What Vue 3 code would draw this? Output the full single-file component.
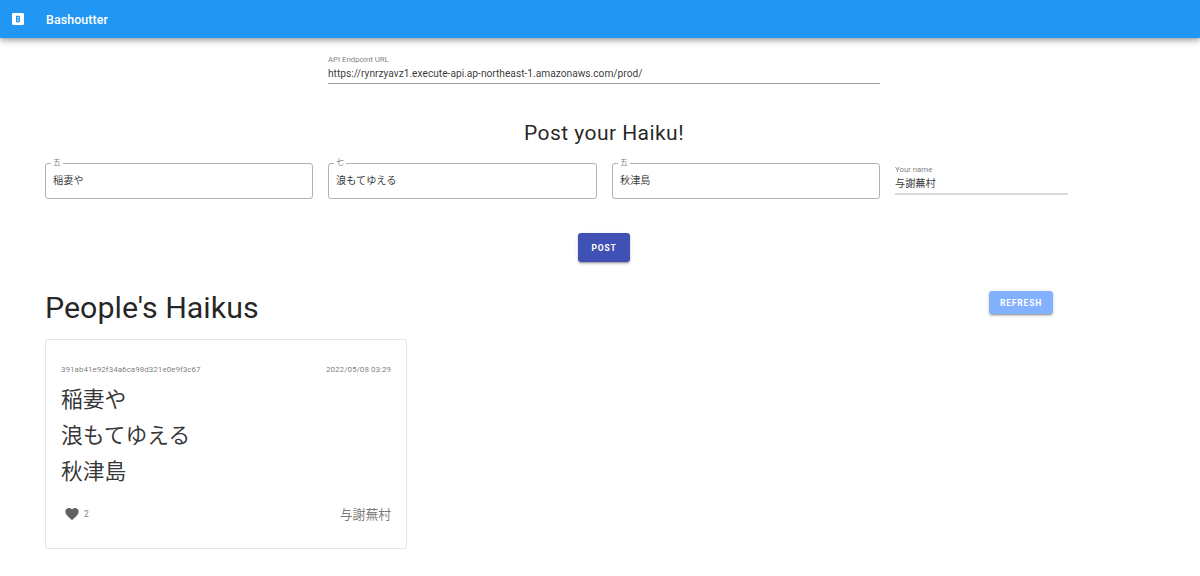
<template>
  <div class="app">
    <header class="app-bar">
      <svg class="logo" viewBox="0 0 24 24"><path fill-rule="evenodd" d="M15,10.5V9A2,2 0 0,0 13,7H9V17H13A2,2 0 0,0 15,15V13.5C15,12.7 14.3,12 13.5,12C14.3,12 15,11.3 15,10.5M13,15H11V13H13V15M13,11H11V9H13V11M19,3H5C3.89,3 3,3.9 3,5V19A2,2 0 0,0 5,21H19A2,2 0 0,0 21,19V5C21,3.89 20.1,3 19,3Z" /></svg>
      <span class="title">Bashoutter</span>
    </header>

    <main class="content">
      <div class="endpoint">
        <div class="small-label">API Endpoint URL</div>
        <div class="line-value">{{ endpoint }}</div>
      </div>

      <h2 class="post-title">Post your Haiku!</h2>

      <div class="form-row">
        <fieldset v-for="(field, i) in fields" :key="i" class="outlined">
          <legend>{{ field.label }}</legend>
          <span>{{ field.value }}</span>
        </fieldset>
        <div class="name-field">
          <div class="small-label">Your name</div>
          <div class="line-value light">与謝蕪村</div>
        </div>
      </div>

      <div class="post-row">
        <button class="btn post">POST</button>
      </div>

      <div class="list-head">
        <h1>People's Haikus</h1>
        <button class="btn refresh">REFRESH</button>
      </div>

      <article class="card">
        <div class="card-top">
          <span>391ab41e92f34a6ca98d321e0e9f3c67</span>
          <span>2022/05/08 03:29</span>
        </div>
        <div class="haiku">
          <p v-for="line in lines" :key="line">{{ line }}</p>
        </div>
        <div class="card-foot">
          <div class="likes">
            <svg class="heart" viewBox="0 0 24 24"><path d="M12,21.35L10.55,20.03C5.4,15.36 2,12.27 2,8.5C2,5.41 4.42,3 7.5,3C9.24,3 10.91,3.81 12,5.09C13.09,3.81 14.76,3 16.5,3C19.58,3 22,5.41 22,8.5C22,12.28 18.6,15.36 13.45,20.03L12,21.35Z" /></svg>
            <span>2</span>
          </div>
          <span class="author">与謝蕪村</span>
        </div>
      </article>
    </main>
  </div>
</template>

<script setup>
const endpoint = 'https://rynrzyavz1.execute-api.ap-northeast-1.amazonaws.com/prod/'
const fields = [
  { label: '五', value: '稲妻や' },
  { label: '七', value: '浪もてゆえる' },
  { label: '五', value: '秋津島' },
]
const lines = ['稲妻や', '浪もてゆえる', '秋津島']
</script>

<style>
html, body {
  margin: 0;
  background: #fff;
}
</style>

<style scoped>
.app {
  height: 576px;
  overflow: hidden;
  font-family: Roboto, "Noto Sans CJK JP", sans-serif;
  color: rgba(0, 0, 0, 0.8);
}

.app-bar {
  display: flex;
  align-items: center;
  height: 38px;
  background: #2196f3;
  box-shadow: 0 2px 4px -1px rgba(0,0,0,.2), 0 4px 5px 0 rgba(0,0,0,.14), 0 1px 10px 0 rgba(0,0,0,.12);
  padding-left: 10px;
  color: #fff;
}
.logo {
  width: 16px;
  height: 16px;
  fill: #fff;
}
.title {
  margin-left: 20px;
  font-size: 12.4px;
  font-weight: 500;
  letter-spacing: 0.1px;
}

.content {
  padding: 17px 0 0 45px;
}

.small-label {
  font-size: 7.8px;
  line-height: 10px;
  color: rgba(0, 0, 0, 0.55);
}
.line-value {
  font-size: 10.2px;
  line-height: 16px;
  padding-top: 1px;
  padding-bottom: 1px;
  border-bottom: 1px solid rgba(0, 0, 0, 0.38);
}
.line-value.light {
  border-bottom: 2px solid rgba(0, 0, 0, 0.15);
}

.endpoint {
  width: 552px;
  margin-left: 283px;
}

.post-title {
  margin: 36px 0 0;
  width: 1118px;
  text-align: center;
  font-size: 21px;
  font-weight: 400;
  line-height: 26px;
  letter-spacing: 0.45px;
  color: rgba(0, 0, 0, 0.87);
}

.form-row {
  display: grid;
  grid-template-columns: 268px 269px 268px 173px;
  column-gap: 15px;
  margin-top: 17px;
  align-items: start;
}
.outlined {
  height: 41px;
  margin: -5px 0 0;
  padding: 0 7px;
  box-sizing: border-box;
  border: 1px solid rgba(0, 0, 0, 0.3);
  border-radius: 3px;
  font-size: 10.2px;
}
.outlined legend {
  font-size: 7.8px;
  line-height: 10px;
  padding: 0 2px;
  margin-left: -2px;
  color: rgba(0, 0, 0, 0.55);
}
.outlined span {
  display: block;
  line-height: 16px;
  margin-top: 5px;
}
.name-field {
  padding-top: 2px;
}

.post-row {
  display: flex;
  justify-content: center;
  width: 1118px;
  margin-top: 34px;
}
.btn {
  border: none;
  border-radius: 3px;
  color: #fff;
  font-family: inherit;
  font-weight: 700;
  font-size: 8.5px;
  letter-spacing: 0.8px;
  padding: 0;
  box-shadow: 0 2px 1px -1px rgba(0,0,0,.2), 0 2px 2px 0 rgba(0,0,0,.14), 0 1px 4px 0 rgba(0,0,0,.12);
}
.post {
  width: 52px;
  height: 29px;
  background: #3f51b5;
}
.refresh {
  width: 64px;
  height: 23px;
  margin-top: 2px;
  background: #82b1ff;
}

.list-head {
  display: flex;
  align-items: flex-start;
  justify-content: space-between;
  width: 1008px;
  margin-top: 27px;
  height: 38px;
}
.list-head h1 {
  margin: 0;
  font-size: 30.4px;
  font-weight: 400;
  line-height: 38px;
  color: rgba(0, 0, 0, 0.87);
}

.card {
  box-sizing: border-box;
  width: 362px;
  height: 210px;
  margin-top: 12px;
  padding: 25px 15px 0;
  border: 1px solid rgba(0, 0, 0, 0.1);
  border-radius: 3px;
}
.card-top {
  display: flex;
  justify-content: space-between;
  font-size: 8px;
  line-height: 10px;
  letter-spacing: 0.03px;
  color: rgba(0, 0, 0, 0.55);
}
.haiku {
  margin-top: 7px;
}
.haiku p {
  margin: 0;
  font-size: 21.8px;
  line-height: 36px;
}
.card-foot {
  display: flex;
  align-items: center;
  justify-content: space-between;
  margin-top: 14px;
}
.likes {
  display: flex;
  align-items: center;
  gap: 4px;
  font-size: 8.5px;
  color: rgba(0, 0, 0, 0.55);
}
.heart {
  width: 16px;
  height: 16px;
  margin-left: 3px;
  fill: #616161;
}
.author {
  font-size: 12.8px;
  color: rgba(0, 0, 0, 0.55);
}
</style>
